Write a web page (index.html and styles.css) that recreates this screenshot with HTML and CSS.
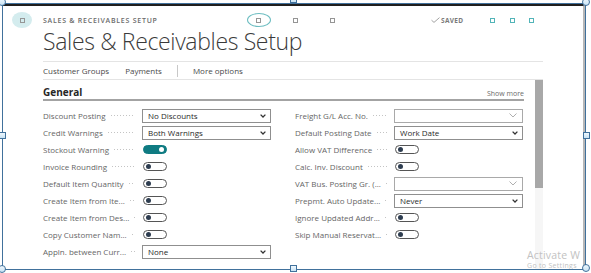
FILE: index.html
```html
<!DOCTYPE html>
<html lang="en">
<head>
	<meta charset="UTF-8">
	<title>Sales &amp; Receivables Setup</title>
	<link rel="stylesheet" href="styles.css">
</head>
<body>
	<div class="stage">
		<div class="frame">
			<div class="page">
				<!-- top bar -->
				<div class="topbar">
					<span class="app-icon"><i class="sq"></i></span>
					<span class="caption">SALES &amp; RECEIVABLES SETUP</span>
					<span class="tb-btn"><span class="ring"><i class="sq"></i></span></span>
					<span class="tb-btn"><i class="sq"></i></span>
					<span class="tb-btn"><i class="sq"></i></span>
					<span class="saved">
						<svg width="9" height="6" viewBox="0 0 9 6"><path d="M0.5 3.2 L3 5.4 L8.5 0.6" fill="none" stroke="#8a8a8a" stroke-width="0.8"/></svg>
						SAVED
					</span>
					<span class="tb-btn small first"><i class="sq teal"></i></span>
					<span class="tb-btn small"><i class="sq teal"></i></span>
					<span class="tb-btn small"><i class="sq teal"></i></span>
				</div>

				<h1 class="title">Sales &amp; Receivables Setup</h1>

				<div class="actions">
					<span>Customer Groups</span>
					<span class="gap">Payments</span>
					<span class="sep"></span>
					<span>More options</span>
				</div>

				<div class="content">
					<div class="scroll-area">
						<div class="group-head">
							<h2>General</h2>
							<span class="more">Show more</span>
						</div>
						<div class="fields">
							<div class="col">
								<div class="lbl"><span>Discount Posting</span><i class="dots"></i></div>
								<div class="select"><span>No Discounts</span><svg width="6" height="4" viewBox="0 0 6 4"><path d="M0.6 0.6 L3 3 L5.4 0.6" fill="none" stroke="#333" stroke-width="1.3"/></svg></div>

								<div class="lbl"><span>Credit Warnings</span><i class="dots"></i></div>
								<div class="select"><span>Both Warnings</span><svg width="6" height="4" viewBox="0 0 6 4"><path d="M0.6 0.6 L3 3 L5.4 0.6" fill="none" stroke="#333" stroke-width="1.3"/></svg></div>

								<div class="lbl"><span>Stockout Warning</span><i class="dots"></i></div>
								<div class="cell"><span class="toggle on"></span></div>

								<div class="lbl"><span>Invoice Rounding</span><i class="dots"></i></div>
								<div class="cell"><span class="toggle"></span></div>

								<div class="lbl"><span>Default Item Quantity</span><i class="dots"></i></div>
								<div class="cell"><span class="toggle"></span></div>

								<div class="lbl"><span>Create Item from Ite...</span><i class="dots"></i></div>
								<div class="cell"><span class="toggle"></span></div>

								<div class="lbl"><span>Create Item from Des...</span><i class="dots"></i></div>
								<div class="cell"><span class="toggle"></span></div>

								<div class="lbl"><span>Copy Customer Nam...</span><i class="dots"></i></div>
								<div class="cell"><span class="toggle"></span></div>

								<div class="lbl"><span>Appln. between Curr...</span><i class="dots"></i></div>
								<div class="select"><span>None</span><svg width="6" height="4" viewBox="0 0 6 4"><path d="M0.6 0.6 L3 3 L5.4 0.6" fill="none" stroke="#333" stroke-width="1.3"/></svg></div>
							</div>
							<div class="col">
								<div class="lbl"><span>Freight G/L Acc. No.</span><i class="dots"></i></div>
								<div class="select lookup"><span></span><svg width="8" height="5" viewBox="0 0 8 5"><path d="M0.5 0.5 L4 4 L7.5 0.5" fill="none" stroke="#9a9a9a" stroke-width="0.8"/></svg></div>

								<div class="lbl"><span>Default Posting Date</span><i class="dots"></i></div>
								<div class="select"><span>Work Date</span><svg width="6" height="4" viewBox="0 0 6 4"><path d="M0.6 0.6 L3 3 L5.4 0.6" fill="none" stroke="#333" stroke-width="1.3"/></svg></div>

								<div class="lbl"><span>Allow VAT Difference</span><i class="dots"></i></div>
								<div class="cell"><span class="toggle"></span></div>

								<div class="lbl"><span>Calc. Inv. Discount</span><i class="dots"></i></div>
								<div class="cell"><span class="toggle"></span></div>

								<div class="lbl"><span>VAT Bus. Posting Gr. (...</span><i class="dots"></i></div>
								<div class="select lookup"><span></span><svg width="8" height="5" viewBox="0 0 8 5"><path d="M0.5 0.5 L4 4 L7.5 0.5" fill="none" stroke="#9a9a9a" stroke-width="0.8"/></svg></div>

								<div class="lbl"><span>Prepmt. Auto Update...</span><i class="dots"></i></div>
								<div class="select"><span>Never</span><svg width="6" height="4" viewBox="0 0 6 4"><path d="M0.6 0.6 L3 3 L5.4 0.6" fill="none" stroke="#333" stroke-width="1.3"/></svg></div>

								<div class="lbl"><span>Ignore Updated Addr...</span><i class="dots"></i></div>
								<div class="cell"><span class="toggle"></span></div>

								<div class="lbl"><span>Skip Manual Reservat...</span><i class="dots"></i></div>
								<div class="cell"><span class="toggle"></span></div>
							</div>
						</div>
					</div>
					<div class="scrollbar"><div class="thumb"></div></div>
				</div>

				<!-- windows watermark, cut by the picture edge -->
				<div class="watermark">
					<p class="wm-big">Activate W</p>
					<p class="wm-small">Go to Settings</p>
				</div>
			</div>
		</div>

		<!-- selection handles -->
		<span class="handle round tl"></span>
		<span class="handle square tm"></span>
		<span class="handle round tr"></span>
		<span class="handle square ml"></span>
		<span class="handle square mr"></span>
		<span class="handle round bl"></span>
		<span class="handle square bm"></span>
		<span class="handle round br"></span>
	</div>
</body>
</html>
```

FILE: styles.css
```css
*{margin:0;padding:0;box-sizing:border-box;}
body {
	font-family: "Open Sans", "Noto Sans", sans-serif;
	color: #333;
	background: #fff;
}
.stage {
	position: relative;
	width: 591px;
	height: 273px;
	padding: 3px 0 0 2px;
	overflow: hidden;
}
.frame {
	width: 584px;
	height: 267px;
	border: 1px solid #41719c;
}
.page {
	position: relative;
	display: flex;
	flex-direction: column;
	height: 100%;
	border-top: 2px solid #1f1f1f;
	border-right: 2px solid #b8b8b8;
	overflow: hidden;
	background: #fff;
}

/* top bar */
.topbar {
	display: flex;
	align-items: center;
	height: 26px;
	padding: 2px 0 0 9px;
	flex: none;
}
.app-icon {
	width: 20px;
	height: 16px;
	border-radius: 50%;
	background: #d4ecee;
	display: flex;
	align-items: center;
	justify-content: center;
}
.sq {
	display: block;
	width: 5px;
	height: 5px;
	border: 1px solid #959595;
}
.sq.teal {
	border-color: #52b4b8;
}
.caption {
	margin-left: 11px;
	width: 197px;
	font-size: 7px;
	font-weight: 600;
	letter-spacing: .75px;
	color: #6b6b6b;
}
.tb-btn {
	width: 37px;
	display: flex;
	justify-content: center;
}
.tb-btn.small {
	width: 19.5px;
}
.tb-btn.first {
	margin-left: 17px;
}
.ring {
	width: 24px;
	height: 14px;
	border: 1px solid #6cbdc1;
	border-radius: 50%;
	display: flex;
	align-items: center;
	justify-content: center;
}
.saved {
	margin-left: 80px;
	width: 35px;
	display: flex;
	align-items: center;
	gap: 1px;
	font-size: 6.5px;
	font-weight: 700;
	letter-spacing: .3px;
	color: #7a7a7a;
}

/* title */
.title {
	flex: none;
	margin: 0 40px;
	padding-bottom: 11px;
	font-size: 23px;
	font-weight: 300;
	line-height: 18px;
	letter-spacing: -.35px;
	color: #3a3a3a;
}

/* action bar */
.actions {
	flex: none;
	display: flex;
	align-items: center;
	height: 19px;
	margin: 0 40px;
	border-top: 1px solid #e4e4e4;
	border-bottom: 1px solid #e4e4e4;
	font-size: 8px;
	color: #4a4a4a;
}
.actions .gap {
	margin-left: 16px;
}
.actions .sep {
	width: 1px;
	height: 12px;
	margin: 0 15px;
	background: #c8c8c8;
}

/* content */
.content {
	flex: 1;
	display: flex;
	margin: 0 40px;
}
.scroll-area {
	flex: 1;
	padding-right: 11px;
}
.scrollbar {
	width: 8px;
	background: #f6f6f6;
}
.thumb {
	height: 108px;
	background: #a8a8a8;
}
.group-head {
	display: flex;
	justify-content: space-between;
	align-items: baseline;
	padding-top: 6px;
	padding-bottom: 1px;
	border-bottom: 2px solid #a3a3a3;
}
.group-head h2 {
	font-size: 10px;
	font-weight: 700;
	line-height: 12px;
	color: #262626;
}
.group-head .more {
	font-size: 7px;
	color: #6b6b6b;
}
.fields {
	display: flex;
	gap: 24px;
	margin-top: 6px;
}
.col {
	display: grid;
	grid-template-columns: 99px 129px;
	grid-auto-rows: 17px;
	align-items: center;
}
.lbl {
	display: flex;
	align-items: center;
	padding-right: 7px;
	font-size: 8px;
	color: #666;
	white-space: nowrap;
}
.dots {
	flex: 1;
	height: 1px;
	margin-left: 5px;
	background: linear-gradient(to right, #c4c4c4 1px, transparent 1px) 0 0 / 3px 1px repeat-x;
}
.select {
	display: flex;
	align-items: center;
	justify-content: space-between;
	height: 14px;
	padding: 0 4px 0 5px;
	border: 1px solid #8f8f8f;
	font-size: 8px;
	color: #2a2a2a;
}
.select.lookup {
	border-color: #a9a9a9;
	padding-right: 5px;
}
.cell {
	display: flex;
	align-items: center;
}
.toggle {
	position: relative;
	width: 24px;
	height: 9px;
	margin-left: 1px;
	border: 1px solid #555;
	border-radius: 5px;
	background: #fff;
}
.toggle::after {
	content: "";
	position: absolute;
	top: 1px;
	left: 2px;
	width: 5px;
	height: 5px;
	border-radius: 50%;
	background: #2e3d50;
}
.toggle.on {
	background: #0f7b82;
	border-color: #0f7b82;
}
.toggle.on::after {
	left: auto;
	right: 2px;
	background: #fff;
}

/* watermark */
.watermark {
	position: absolute;
	left: 524px;
	top: 243px;
	color: #c2c2c2;
	white-space: nowrap;
}
.wm-big {
	font-size: 10.5px;
	line-height: 12px;
	letter-spacing: .2px;
}
.wm-small {
	font-size: 7px;
	line-height: 9px;
	letter-spacing: .3px;
}

/* selection handles */
.handle {
	position: absolute;
	border: 1px solid #41719c;
	background: linear-gradient(#eef7fd, #c9e3f4);
}
.handle.round {
	width: 8px;
	height: 8px;
	border-radius: 50%;
}
.handle.square {
	width: 7px;
	height: 7px;
}
.tl { left: -2px; top: -2px; }
.tr { left: 582px; top: -2px; }
.bl { left: -2px; top: 265px; }
.br { left: 582px; top: 264px; }
.tm { left: 290px; top: -4px; }
.bm { left: 290px; top: 265px; }
.ml { left: -1px; top: 132px; }
.mr { left: 583px; top: 132px; }
```
